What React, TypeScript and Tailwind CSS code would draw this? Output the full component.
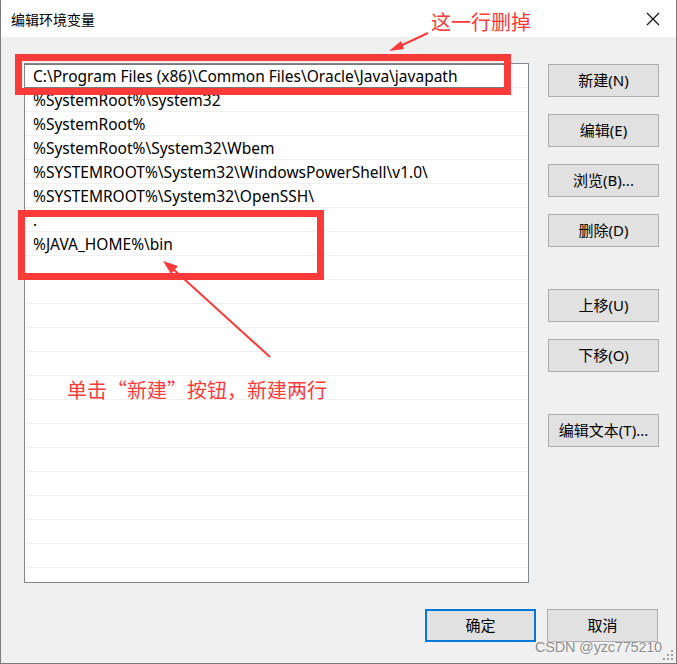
import React from "react";

const rows = [
  "C:\\Program Files (x86)\\Common Files\\Oracle\\Java\\javapath",
  "%SystemRoot%\\system32",
  "%SystemRoot%",
  "%SystemRoot%\\System32\\Wbem",
  "%SYSTEMROOT%\\System32\\WindowsPowerShell\\v1.0\\",
  "%SYSTEMROOT%\\System32\\OpenSSH\\",
  ".",
  "%JAVA_HOME%\\bin",
];

const font = { fontFamily: '"Noto Sans", "Noto Sans CJK SC", sans-serif' };
const cjk = { fontFamily: '"Noto Sans CJK SC", "Noto Sans", sans-serif' };

function Btn({ label, primary }: { label: string; primary?: boolean }) {
  return (
    <div
      className={
        "flex h-[33px] w-[111px] items-center justify-center bg-[#e1e1e1] text-[15px] text-black " +
        (primary ? "border-2 border-[#0078d7]" : "border border-[#adadad]")
      }
    >
      {label}
    </div>
  );
}

export default function App() {
  const allRows = [...rows];
  while (allRows.length < 22) allRows.push("");
  return (
    <div className="relative h-[664px] w-[677px] overflow-hidden bg-white" style={font}>
      <div className="flex h-[664px] w-[677px] flex-col border-b border-l border-r border-[#7a7a7a]">
        {/* Title bar */}
        <div className="flex h-[37px] shrink-0 items-center justify-between bg-white pl-[10px] pr-[16px] pt-[1px]">
          <span className="text-[14px] text-black">编辑环境变量</span>
          <svg width="14" height="14" viewBox="0 0 14 14">
            <path d="M1 1 L13 13 M13 1 L1 13" stroke="#111" strokeWidth="1.2" />
          </svg>
        </div>
        {/* Body */}
        <div className="flex flex-1 flex-col bg-[#f0f0f0] pl-[23px] pt-[26px]">
          <div className="flex">
            <div className="h-[520px] w-[505px] overflow-hidden border border-[#828790] bg-white">
              {allRows.map((r, i) => (
                <div
                  key={i}
                  className="flex h-[24px] items-center whitespace-nowrap border-b border-[#f0f0f0] pl-[8px] pt-[2px] text-[15.5px] text-black"
                >
                  {i === 0 ? (
                    <div className="-ml-[10px] -mt-[2px] flex h-[24px] w-[484px] items-center border border-[#7a7a7a] bg-white pl-[9px] pt-[2px]">
                      {r}
                    </div>
                  ) : (
                    r
                  )}
                </div>
              ))}
            </div>
            <div className="ml-[19px] flex flex-col pt-[1px]">
              <Btn label="新建(N)" />
              <div className="h-[17px]" />
              <Btn label="编辑(E)" />
              <div className="h-[17px]" />
              <Btn label="浏览(B)..." />
              <div className="h-[17px]" />
              <Btn label="删除(D)" />
              <div className="h-[42px]" />
              <Btn label="上移(U)" />
              <div className="h-[17px]" />
              <Btn label="下移(O)" />
              <div className="h-[42px]" />
              <Btn label="编辑文本(T)..." />
            </div>
          </div>
          <div className="mt-[26px] flex justify-end gap-[11px] pr-[18px]">
            <Btn label="确定" primary />
            <Btn label="取消" />
          </div>
        </div>
      </div>

      {/* Watermark */}
      <div
        className="absolute left-[535px] top-[637px] whitespace-nowrap text-[14.5px] leading-[20px] tracking-[-0.2px] text-[#8c8c8c]"
        style={{ fontFamily: '"Liberation Sans", sans-serif', textShadow: "0 0 2px #fff, 0 0 1px #fff" }}
      >
        CSDN @yzc775210
      </div>

      {/* Resize grip */}
      <svg className="absolute left-[663px] top-[650px]" width="12" height="12" viewBox="0 0 12 12">
        {[
          [8, 0],
          [4, 4],
          [8, 4],
          [0, 8],
          [4, 8],
          [8, 8],
        ].map(([x, y], i) => (
          <rect key={i} x={x} y={y} width="2" height="2" fill="#a0a0a0" />
        ))}
      </svg>

      {/* Annotations */}
      <div className="absolute left-[15px] top-[54px] h-[41px] w-[496px] border-[7px] border-[#fb3a3a]" />
      <div className="absolute left-[18px] top-[210px] h-[70px] w-[306px] border-[7px] border-[#fb3a3a]" />
      <div className="absolute left-[431px] top-[8px] text-[20px] leading-[28px] text-[#fb3a3a]" style={cjk}>
        这一行删掉
      </div>
      <div className="absolute left-[67px] top-[376px] whitespace-nowrap text-[20px] leading-[28px] text-[#fb3a3a]" style={cjk}>
        单击“新建”按钮，新建两行
      </div>
      <svg className="absolute left-0 top-0" width="677" height="664" viewBox="0 0 677 664">
        <path d="M428 33 L398 47" stroke="#fb3a3a" strokeWidth="2" />
        <path d="M389 51 L401 41 L404 49 Z" fill="#fb3a3a" />
        <path d="M270 357 L172 268" stroke="#fb3a3a" strokeWidth="2" />
        <path d="M163 261 L178 266 L171 274 Z" fill="#fb3a3a" />
      </svg>
    </div>
  );
}
